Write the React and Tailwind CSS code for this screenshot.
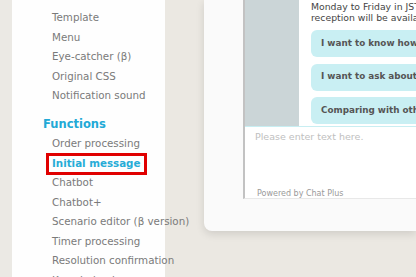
export default function App() {
  const topItems = ["Template", "Menu", "Eye-catcher (β)", "Original CSS", "Notification sound"];
  const fnItems = ["Order processing", "Initial message", "Chatbot", "Chatbot+", "Scenario editor (β version)", "Timer processing", "Resolution confirmation", "Knowledge base"];
  return (
    <div className="w-[416px] h-[277px] overflow-hidden bg-[#ebe8e2] flex font-['DejaVu_Sans',Verdana,sans-serif]">
      <div className="w-[12px] h-full bg-[#ebe9e4] shrink-0"></div>
      <div className="w-[153px] h-full bg-[#fefefe] shrink-0 relative z-10">
        <div className="mt-[-14.75px] text-[10.3px] text-[#7a7a7a] leading-[19.5px]">
          <div className="pl-[40px] whitespace-nowrap mb-[3.5px]">Design</div>
          {topItems.map((t) => (
            <div key={t} className="pl-[40px] whitespace-nowrap">{t}</div>
          ))}
          <div className="pl-[31px] mt-[8px] mb-[0.5px] leading-[20px] text-[11.5px] font-bold text-[#22a9d6]">Functions</div>
          {fnItems.map((t) => (
            <div key={t} className="relative pl-[40px] whitespace-nowrap">
              {t === "Initial message" ? (
                <>
                  <span className="text-[#27acd7] font-semibold">{t}</span>
                  <span className="absolute left-[34px] top-[-1.25px] w-[101px] h-[22px] border-[3px] border-[#e00000]"></span>
                </>
              ) : (
                t
              )}
            </div>
          ))}
        </div>
      </div>
      <div className="w-[39px] shrink-0"></div>
      <div className="flex-1 h-[231px] bg-[#fafafa] rounded-bl-[8px] shadow-[0_3px_8px_rgba(0,0,0,0.12)] pl-[39px] overflow-hidden">
        <div className="h-[199px] border-l-2 border-[#c2c2c2] flex flex-col bg-white border-b border-b-[#e8e8e8]">
          <div className="h-[126px] flex overflow-hidden">
            <div className="w-[54px] shrink-0 bg-[#cbd5d7]"></div>
            <div className="flex-1 pl-[12px] overflow-hidden">
              <div className="pt-[0.5px] text-[9.3px] leading-[11px] text-[#444] whitespace-nowrap">
                <div>Monday to Friday in JST</div>
                <div>reception will be available</div>
              </div>
              <div className="mt-[7.5px] flex flex-col gap-[6.5px]">
                {["I want to know how to use it", "I want to ask about the price", "Comparing with other services"].map((b) => (
                  <div key={b} className="h-[27px] w-[200px] rounded-[6px] bg-[#c9eff3] pl-[10px] flex items-center text-[8.8px] font-bold text-[#555] whitespace-nowrap">{b}</div>
                ))}
              </div>
            </div>
          </div>
          <div className="flex-1 border-t border-[#c8eef2] relative">
            <div className="pl-[10px] pt-[3px] text-[9.5px] leading-[13px] text-[#c0c0c0]">Please enter text here.</div>
            <div className="absolute left-[12px] top-[62px] text-[8px] leading-[10px] text-[#9a9a9a]">Powered by Chat Plus</div>
          </div>
        </div>
      </div>
    </div>
  );
}
